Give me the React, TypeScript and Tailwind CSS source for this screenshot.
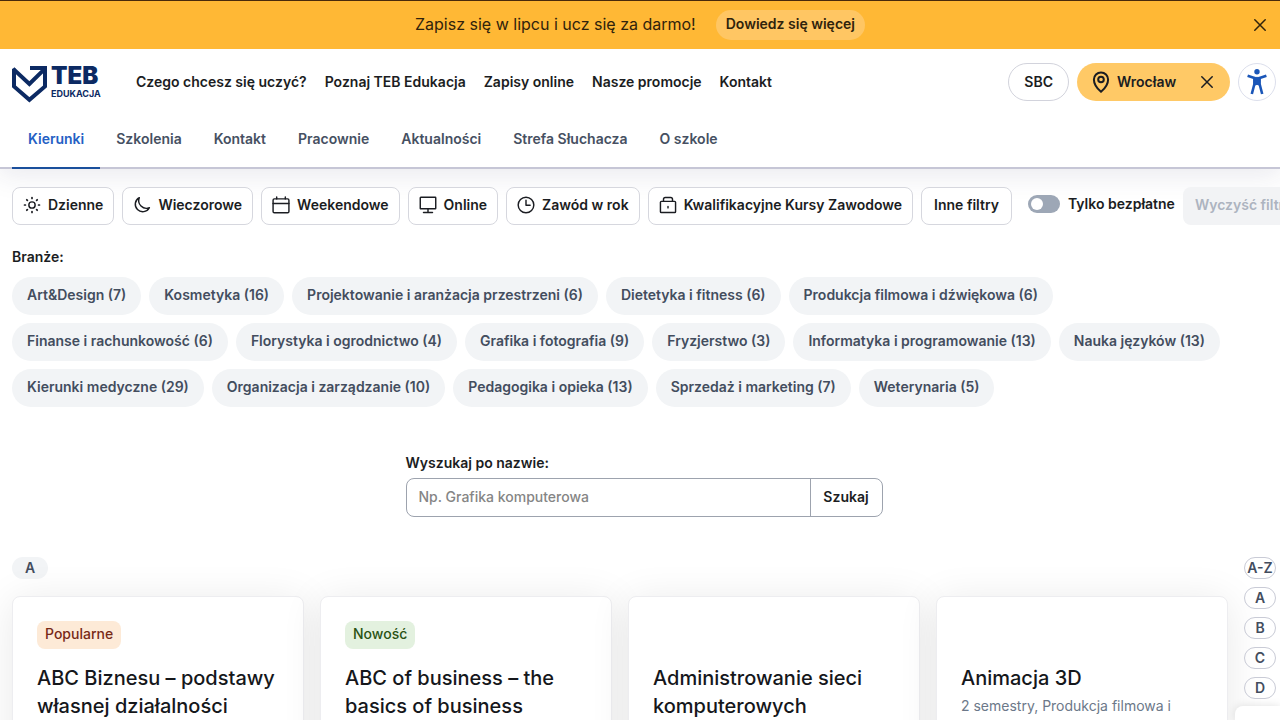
import React from "react";

type IconProps = { children: React.ReactNode; className?: string };

function Icon({ children, className = "size-[18px]" }: IconProps) {
  return (
    <svg
      viewBox="0 0 20 20"
      className={className}
      fill="none"
      stroke="currentColor"
      strokeWidth="1.6"
      strokeLinecap="round"
      strokeLinejoin="round"
      aria-hidden="true"
    >
      {children}
    </svg>
  );
}

const icons = {
  sun: (
    <Icon>
      <circle cx="10" cy="10" r="3.5" />
      <path d="M10 1.7v1M10 17.3v1M1.7 10h1M17.3 10h1M4.2 4.2l.7.7M15.1 15.1l.7.7M4.2 15.8l.7-.7M15.1 4.9l.7-.7" strokeWidth="1.9" />
    </Icon>
  ),
  moon: (
    <Icon>
      <path d="M7 1.8A8.3 8.3 0 1 0 18.2 13 8.6 8.6 0 0 1 7 1.8Z" />
    </Icon>
  ),
  calendar: (
    <Icon>
      <rect x="1.2" y="3.2" width="17.6" height="15.4" rx="1.4" />
      <path d="M1.2 8.4h17.6M5.2 1v2.2M14.8 1v2.2" />
    </Icon>
  ),
  monitor: (
    <Icon>
      <rect x="1.4" y="1.4" width="17.2" height="12.8" rx="0.6" />
      <path d="M10 14.2v4M5 18.4h10" />
    </Icon>
  ),
  clock: (
    <Icon>
      <circle cx="10" cy="10" r="8.7" />
      <path d="M10 4.8v5.4h4.6" />
    </Icon>
  ),
  lock: (
    <Icon>
      <rect x="1.6" y="6" width="16.8" height="12.4" rx="1" />
      <path d="M5 5.8V3.6q0-2 2-2h6q2 0 2 2v2.2M10 11.6v1.6" />
    </Icon>
  ),
};

function Cross() {
  return (
    <svg viewBox="0 0 12 12" className="size-3 shrink-0" fill="none" stroke="currentColor" strokeWidth="1.5" strokeLinecap="round" aria-hidden="true">
      <path d="M.8.8l10.4 10.4M11.2.8.8 11.2" />
    </svg>
  );
}

const mainLinks = ["Czego chcesz się uczyć?", "Poznaj TEB Edukacja", "Zapisy online", "Nasze promocje", "Kontakt"];
const subLinks = ["Kierunki", "Szkolenia", "Kontakt", "Pracownie", "Aktualności", "Strefa Słuchacza", "O szkole"];

const filters = [
  { label: "Dzienne", icon: icons.sun },
  { label: "Wieczorowe", icon: icons.moon },
  { label: "Weekendowe", icon: icons.calendar },
  { label: "Online", icon: icons.monitor },
  { label: "Zawód w rok", icon: icons.clock },
  { label: "Kwalifikacyjne Kursy Zawodowe", icon: icons.lock },
  { label: "Inne filtry", icon: null },
];

const industries = [
  "Art&Design (7)",
  "Kosmetyka (16)",
  "Projektowanie i aranżacja przestrzeni (6)",
  "Dietetyka i fitness (6)",
  "Produkcja filmowa i dźwiękowa (6)",
  "Finanse i rachunkowość (6)",
  "Florystyka i ogrodnictwo (4)",
  "Grafika i fotografia (9)",
  "Fryzjerstwo (3)",
  "Informatyka i programowanie (13)",
  "Nauka języków (13)",
  "Kierunki medyczne (29)",
  "Organizacja i zarządzanie (10)",
  "Pedagogika i opieka (13)",
  "Sprzedaż i marketing (7)",
  "Weterynaria (5)",
];

const courses = [
  { title: "ABC Biznesu – podstawy własnej działalności", tag: "Popularne", tagStyle: "bg-[#fdead7] text-[#772917]" },
  { title: "ABC of business – the basics of business", tag: "Nowość", tagStyle: "bg-[#e3f1df] text-[#2b5314]" },
  { title: "Administrowanie sieci komputerowych" },
  { title: "Animacja 3D", details: "2 semestry, Produkcja filmowa i" },
];

function Logo() {
  return (
    <a href="#" aria-label="TEB Edukacja" className="flex w-[100px] shrink-0 items-start gap-1 pt-1 text-[#0c2a63]">
      <svg viewBox="0 0 35 37" className="h-[37px] w-[35px] shrink-0" fill="none" stroke="currentColor" strokeWidth="4" aria-hidden="true">
        <path d="M2 2.8V20.4L17.4 33.8 33 20.4V2H18" />
        <path d="M1 2.6 17.4 18 33 2.6" />
      </svg>
      <span className="flex flex-col">
        <span className="text-2xl leading-5 font-black">TEB</span>
        <span className="mt-0.5 text-[9px] leading-3 font-bold">EDUKACJA</span>
      </span>
    </a>
  );
}

export default function App() {
  return (
    <div className="relative h-screen overflow-hidden bg-white font-['Inter',sans-serif] text-sm font-semibold text-[#1b1d22]">
      <div className="relative flex h-[49px] items-center justify-center gap-5 border-t border-[#4a2a0a] bg-[#ffb835] text-[#30230c]">
        <p className="pb-0.5 text-base font-normal">Zapisz się w lipcu i ucz się za darmo!</p>
        <a href="#" className="rounded-full bg-[#ffc663] px-2.5 pt-1 pb-1.5">Dowiedz się więcej</a>
        <button type="button" aria-label="Zamknij" className="absolute top-4 right-3.5 flex h-4 items-center">
          <Cross />
        </button>
      </div>

      <header className="relative z-10 flex h-[66px] items-center bg-white pr-1 pl-3">
        <Logo />
        <nav className="ml-6 flex flex-1 gap-[18px]">
          {mainLinks.map((l) => (
            <a key={l} href="#" className="whitespace-nowrap">{l}</a>
          ))}
        </nav>
        <div className="flex items-center gap-2">
          <a href="#" className="flex h-[38px] items-center rounded-full border border-[#d2d3dc] px-[15px]">SBC</a>
          <div className="flex h-[38px] w-[153px] items-center rounded-full bg-[#ffc966] pr-[17px] pl-3.5">
            <svg viewBox="0 0 20 24" className="h-6 w-5" fill="none" stroke="currentColor" strokeWidth="2" aria-hidden="true">
              <path d="M10 21.8C6.4 18.8 2.9 13.9 2.9 9.5a7.1 7.1 0 0 1 14.2 0c0 4.4-3.5 9.3-7.1 12.3Z" />
              <circle cx="10" cy="9.5" r="2.8" />
            </svg>
            <span className="ml-1.5 flex-1">Wrocław</span>
            <button type="button" aria-label="Usuń miasto"><Cross /></button>
          </div>
          <button type="button" aria-label="Dostępność" className="flex size-[38px] items-center justify-center rounded-full border border-[#dcdfec] text-[#1a56b8]">
            <svg viewBox="0 0 20 26" className="h-[26px] w-5" fill="currentColor" stroke="currentColor" strokeLinecap="round" strokeLinejoin="round" aria-hidden="true">
              <circle cx="10" cy="2.8" r="2.7" stroke="none" />
              <path d="M.6 6.8 7.4 9v6L4.8 25M19.4 6.8 12.6 9v6l2.6 10" fill="none" strokeWidth="2.6" strokeLinecap="butt" />
              <path d="M7.4 8.4h5.2v7.8L10 15.4l-2.6.8Z" strokeWidth="1" />
            </svg>
          </button>
        </div>
      </header>

      <nav className="flex h-[54px] border-b-2 border-[#c6c6d6] px-3 text-[#465062] shadow-[0_4px_28px_2px_rgba(40,40,90,0.1)]">
        {subLinks.map((l, i) => (
          <a
            key={l}
            href="#"
            className={
              i === 0
                ? "-mb-0.5 border-b-2 border-[#1a4f9c] px-4 pt-3.5 text-[#2460c4]"
                : "px-4 pt-3.5"
            }
          >
            {l}
          </a>
        ))}
      </nav>

      <main className="relative px-3 pt-[18px]">
        <div className="-mr-3 flex items-center gap-2 overflow-hidden">
          {filters.map((f) => (
            <button key={f.label} type="button" className="flex h-[38px] shrink-0 items-center gap-[7px] rounded-lg border border-[#d6d7de] bg-white px-2.5 pb-0.5 whitespace-nowrap">
              {f.icon}
              <span className={f.icon ? "" : "px-0.5"}>{f.label}</span>
            </button>
          ))}
          <label className="ml-2 flex shrink-0 items-center gap-2 pb-1 whitespace-nowrap">
            <input type="checkbox" className="peer sr-only" />
            <span className="flex h-[18px] w-8 items-center rounded-full bg-[#9da7b6] px-[3px] peer-checked:justify-end peer-checked:bg-[#1a56b8]">
              <span className="size-3 rounded-full bg-white" />
            </span>
            Tylko bezpłatne
          </label>
          <button type="button" disabled className="h-[38px] shrink-0 rounded-lg bg-[#f2f3f5] px-3 pb-0.5 whitespace-nowrap text-[#adb4c0]">Wyczyść filtry</button>
        </div>

        <h2 className="mt-[22px]">Branże:</h2>
        <div className="mt-2.5 flex flex-wrap gap-2">
          {industries.map((name) => (
            <button key={name} type="button" className="h-[38px] rounded-full bg-[#f2f4f6] px-[15px] pb-0.5 whitespace-nowrap text-[#434d5e]">{name}</button>
          ))}
        </div>

        <form className="mt-[46px] ml-2 flex flex-col items-center" onSubmit={(e) => e.preventDefault()}>
          <div className="w-[477px] max-w-full">
            <label htmlFor="course-name">Wyszukaj po nazwie:</label>
            <div className="mt-[5px] flex h-[39px] rounded-lg border border-[#9da3ae]">
              <input id="course-name" type="text" placeholder="Np. Grafika komputerowa" className="min-w-0 flex-1 rounded-l-lg px-3 pb-0.5 font-medium placeholder:text-[#858585]" />
              <button type="submit" className="w-[72px] border-l border-[#9da3ae] pb-0.5">Szukaj</button>
            </div>
          </div>
        </form>

        <div className="mt-10 -mr-2 flex gap-4">
          <section className="min-w-0 flex-1">
            <h2 className="flex h-[22px] w-9 items-center justify-center rounded-full bg-[#f2f4f6] text-[#434d5e]">A</h2>
            <div className="mt-[17px] grid grid-cols-4 gap-4">
              {courses.map((c) => (
                <article key={c.title} className="min-h-80 rounded-lg border border-[#ededf0] bg-white px-6 pt-6 shadow-[0_4px_40px_rgba(0,0,0,0.09)]">
                  <div className="h-7">
                    {c.tag && <span className={"inline-flex h-7 items-center rounded-lg px-2 pb-0.5 font-medium " + c.tagStyle}>{c.tag}</span>}
                  </div>
                  <h3 className="mt-[15px] text-xl leading-7 font-medium text-[#15171b]">{c.title}</h3>
                  {c.details && <p className="mt-1 font-normal text-[#6c7889]">{c.details}</p>}
                </article>
              ))}
            </div>
          </section>
          <nav aria-label="Alfabet" className="flex w-8 shrink-0 flex-col gap-2">
            {["A-Z", "A", "B", "C", "D"].map((l) => (
              <a key={l} href="#" className="flex h-[22px] items-center justify-center rounded-full border border-[#c9cbd6] text-[#434d5e]">{l}</a>
            ))}
          </nav>
        </div>
      </main>
      <div className="absolute right-0 bottom-0 h-3.5 w-[45px] rounded-tl-lg bg-white shadow-[0_0_10px_rgba(0,0,0,0.12)]" />
    </div>
  );
}
